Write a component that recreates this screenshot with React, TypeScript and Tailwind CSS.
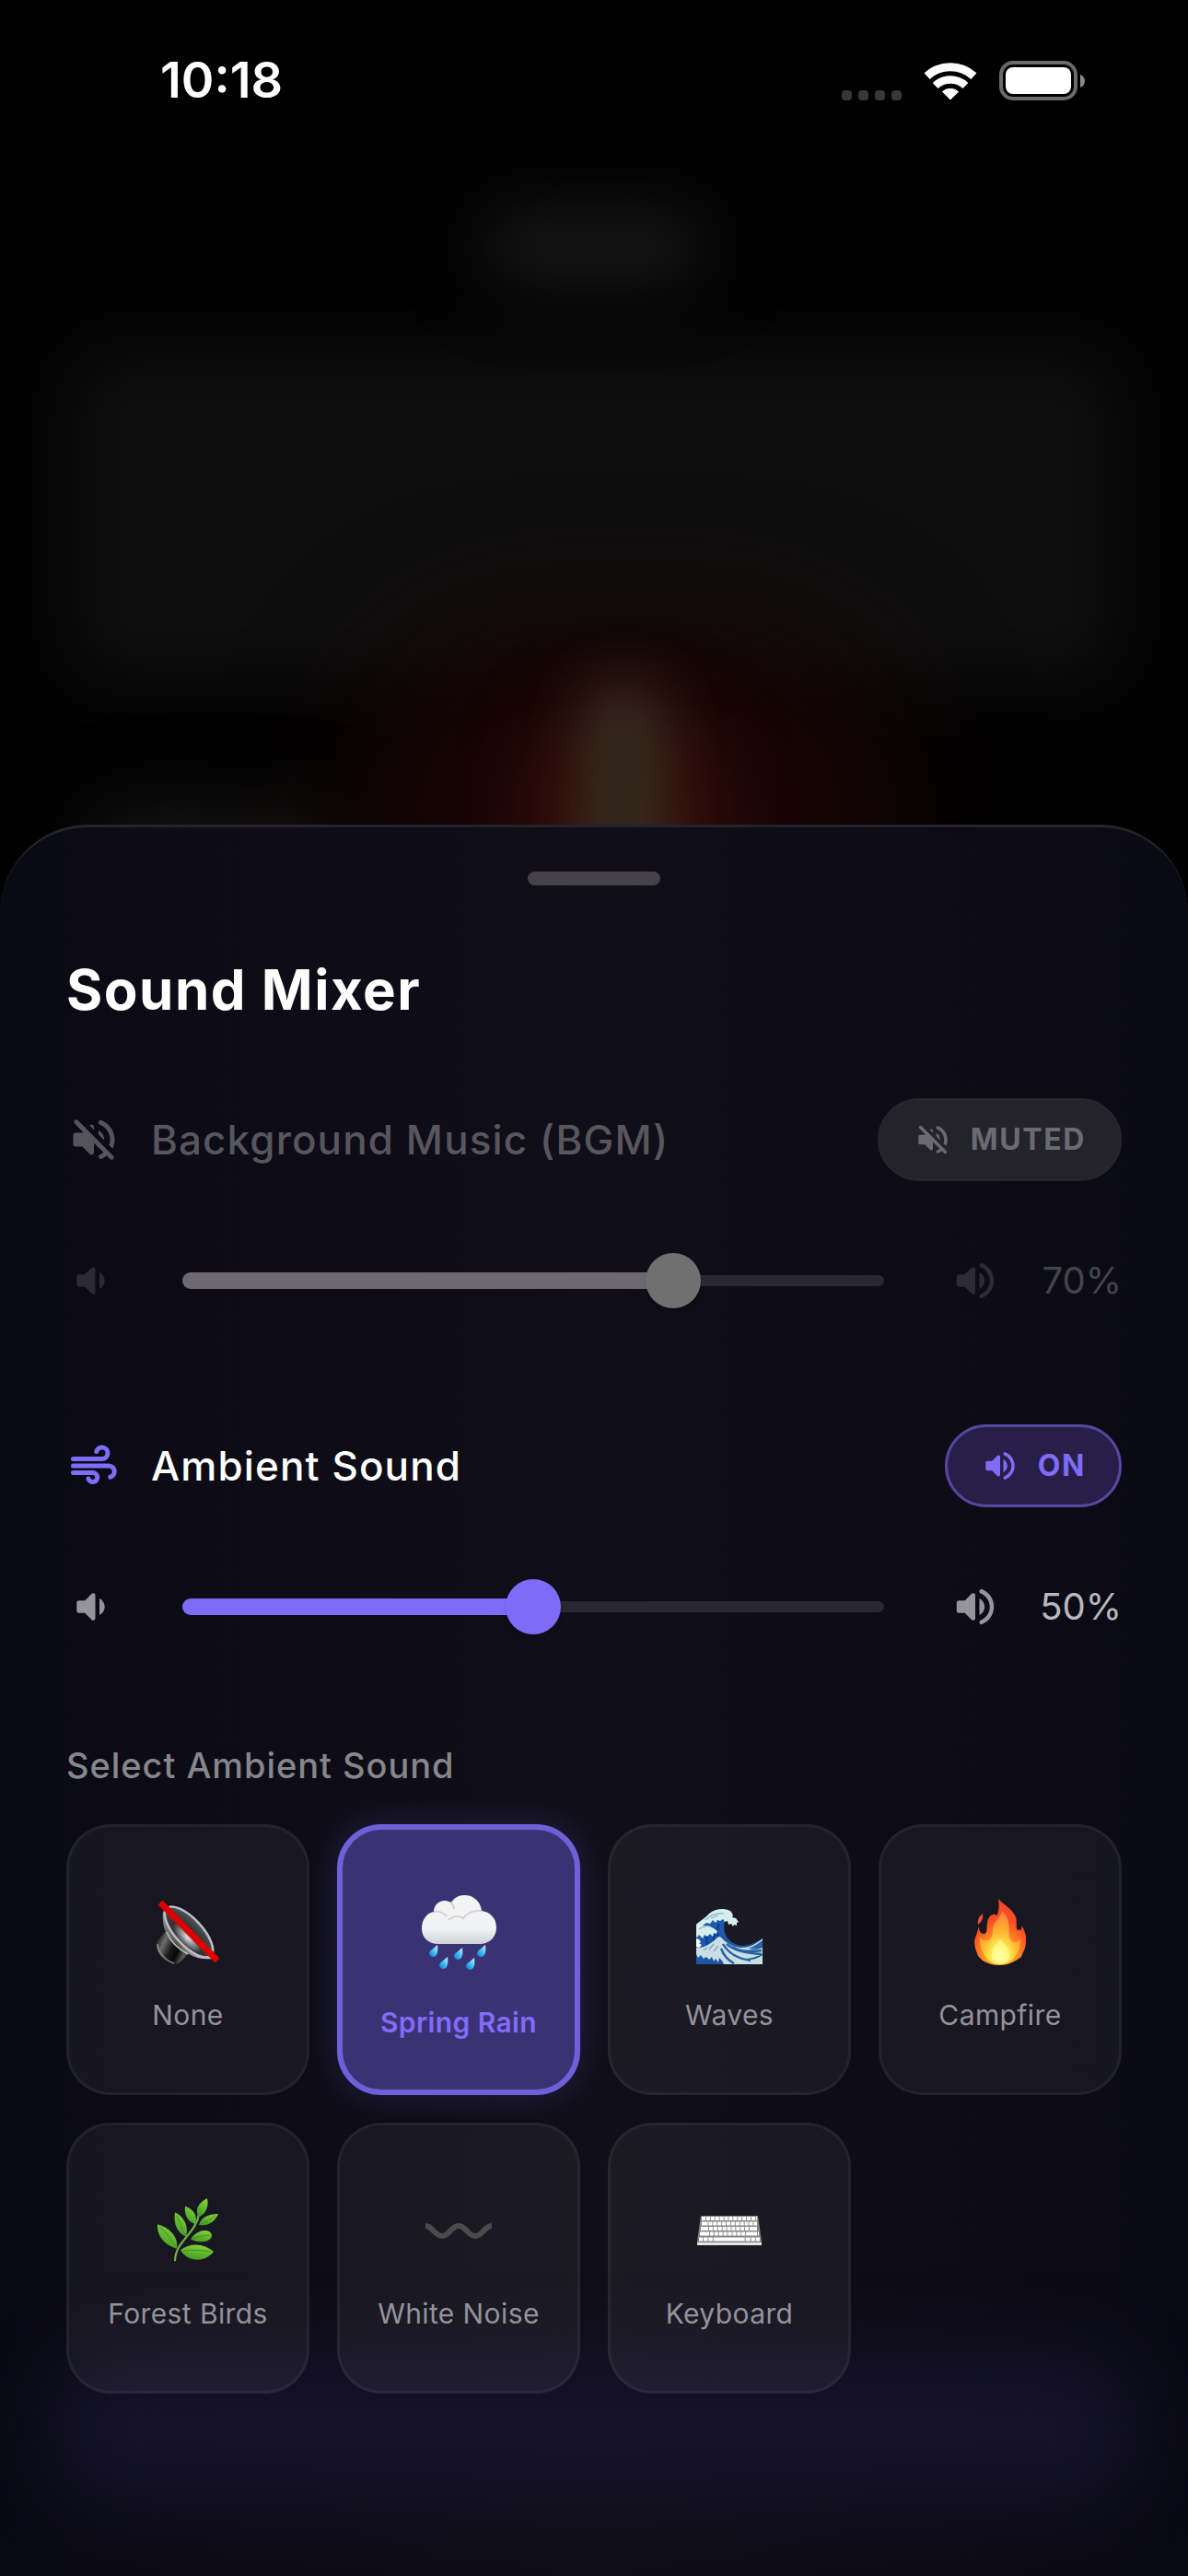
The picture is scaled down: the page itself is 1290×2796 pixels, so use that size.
import { useState } from "react";

type IconProps = { className?: string };

type Sound = {
  id: string;
  label: string;
  icon: () => React.JSX.Element;
};

function VolumeUpIcon({ className }: IconProps) {
  return (
    <svg viewBox="0 0 24 24" fill="currentColor" className={className} aria-hidden="true">
      <path d="M3 10v4c0 .55.45 1 1 1h3l3.29 3.29c.63.63 1.71.18 1.71-.71V6.41c0-.89-1.08-1.34-1.71-.71L7 9H4c-.55 0-1 .45-1 1zm13.5 2c0-1.77-1.02-3.29-2.5-4.03v8.05c1.48-.73 2.5-2.25 2.5-4.02zM14 4.45v.2c0 .38.25.71.6.85C17.18 6.53 19 9.06 19 12s-1.82 5.47-4.4 6.5c-.36.14-.6.47-.6.85v.2c0 .63.63 1.07 1.21.85C18.6 19.11 21 15.84 21 12s-2.4-7.11-5.79-8.4c-.58-.23-1.21.22-1.21.85z" />
    </svg>
  );
}

function VolumeDownIcon({ className }: IconProps) {
  return (
    <svg viewBox="0 0 24 24" fill="currentColor" className={className} aria-hidden="true">
      <path d="M18.5 12c0-1.77-1.02-3.29-2.5-4.03v8.05c1.48-.73 2.5-2.25 2.5-4.02zM5 10v4c0 .55.45 1 1 1h3l3.29 3.29c.63.63 1.71.18 1.71-.71V6.41c0-.89-1.08-1.34-1.71-.71L9 9H6c-.55 0-1 .45-1 1z" />
    </svg>
  );
}

function VolumeOffIcon({ className }: IconProps) {
  return (
    <svg viewBox="0 0 24 24" fill="currentColor" className={className} aria-hidden="true">
      <path d="M3.63 3.63c-.39.39-.39 1.02 0 1.41L7.29 8.7 7 9H4c-.55 0-1 .45-1 1v4c0 .55.45 1 1 1h3l3.29 3.29c.63.63 1.71.18 1.71-.71v-4.17l4.18 4.18c-.49.37-1.02.68-1.6.91-.36.15-.58.53-.58.92 0 .72.73 1.18 1.39.91.8-.33 1.55-.77 2.22-1.31l1.34 1.34c.39.39 1.02.39 1.41 0 .39-.39.39-1.02 0-1.41L5.05 3.63c-.39-.39-1.02-.39-1.42 0zM19 12c0 .82-.15 1.61-.41 2.34l1.53 1.53c.56-1.17.88-2.48.88-3.87 0-3.83-2.4-7.11-5.78-8.4-.59-.23-1.22.23-1.22.86v.19c0 .38.25.71.61.85C17.18 6.54 19 9.06 19 12zm-8.71-6.29l-.17.17L12 7.76V6.41c0-.89-1.08-1.33-1.71-.7zM16.5 12c0-1.77-1.02-3.29-2.5-4.03v1.79l2.48 2.48c.01-.08.02-.16.02-.24z" />
    </svg>
  );
}

function AirIcon({ className }: IconProps) {
  return (
    <svg viewBox="0 0 24 24" fill="none" stroke="currentColor" strokeWidth="2" strokeLinecap="round" className={className} aria-hidden="true">
      <path d="M3 9h12.5a2.5 2.5 0 1 0-2.4-3.2" />
      <path d="M3 12h15.5a2.5 2.5 0 0 1 .6 4.9" />
      <path d="M3 15h8.5a2 2 0 1 1-1.9 2.6" />
    </svg>
  );
}

function MutedSpeakerArt() {
  return (
    <svg viewBox="0 0 70 70" className="size-[70px]" aria-hidden="true">
      <defs>
        <linearGradient id="speakerBase" x1="0" y1="0.3" x2="1" y2="0.8">
          <stop offset="0" stopColor="#1a1a1a" />
          <stop offset="0.2" stopColor="#6d6d6d" />
          <stop offset="0.45" stopColor="#1c1c1c" />
          <stop offset="0.65" stopColor="#050505" />
          <stop offset="0.85" stopColor="#5a5a5a" />
          <stop offset="1" stopColor="#111" />
        </linearGradient>
        <linearGradient id="speakerHorn" x1="0" y1="0" x2="1" y2="1">
          <stop offset="0" stopColor="#8d8d8d" />
          <stop offset="0.5" stopColor="#54534f" />
          <stop offset="1" stopColor="#cfcfd2" />
        </linearGradient>
        <radialGradient id="speakerCone" cx="0.32" cy="0.55" r="0.6">
          <stop offset="0" stopColor="#e4e4e8" />
          <stop offset="0.25" stopColor="#8b8c8f" />
          <stop offset="0.5" stopColor="#303234" />
          <stop offset="1" stopColor="#4a4e50" />
        </radialGradient>
      </defs>
      <path d="M11 34 2 44c-4 6 2 18 11 24 6 3 10 3 14-1l9-8z" fill="url(#speakerBase)" />
      <path d="M2 48c0 8 8 18 18 21" fill="none" stroke="#8f8f8f" strokeWidth="1.5" />
      <path d="M8 12c-1 9 0 17 3 23 4 10 14 20 25 24 9 5 18 6 26 5z" fill="url(#speakerHorn)" />
      <path d="M12 35c4 10 13 19 23 24" fill="none" stroke="#bdbdbd" strokeWidth="1.5" />
      <ellipse cx="36" cy="35" rx="14.5" ry="35" transform="rotate(-43 36 35)" fill="url(#speakerCone)" stroke="#bcbdc6" strokeWidth="2.6" />
      <path d="M5 3 67 66" stroke="#de0000" strokeWidth="7" />
    </svg>
  );
}

function RainCloudArt() {
  return (
    <svg viewBox="0 0 81 81" className="size-[81px]" aria-hidden="true">
      <defs>
        <linearGradient id="cloudFill" x1="0" y1="0" x2="0" y2="1">
          <stop offset="0" stopColor="#f4f4f5" />
          <stop offset="0.7" stopColor="#f1f2f3" />
          <stop offset="1" stopColor="#cfd2d6" />
        </linearGradient>
        <linearGradient id="dropFill" x1="1" y1="0" x2="0.2" y2="1">
          <stop offset="0" stopColor="#d5f6ff" />
          <stop offset="0.5" stopColor="#4cc6f7" />
          <stop offset="1" stopColor="#0c86d6" />
        </linearGradient>
        <path id="drop" d="M9 0c1 7 0 13-5 13-5-1-5-6-1-8z" />
      </defs>
      <path d="M18 53C7 53 0 46 0 36c0-10 6-17 13-18 0-7 5-12 12-12 3 0 5 1 7 2 3-5 8-8 14-8 11 0 18 8 19 17 9 1 16 8 16 18 0 11-8 18-18 18z" fill="url(#cloudFill)" />
      <path d="M13 18c5-1 10 1 14 5M31 8c3 2 4 4 4 7M29 27c5-5 13-5 17-1M45 25c4-6 12-9 20-8" fill="none" stroke="#d0d1d4" strokeWidth="1.8" />
      <g fill="url(#dropFill)">
        <use href="#drop" x="8" y="54" />
        <use href="#drop" x="35" y="57" />
        <use href="#drop" x="60" y="54" />
        <use href="#drop" x="19" y="67" />
        <use href="#drop" x="48" y="68" />
      </g>
    </svg>
  );
}

function WaveArt() {
  return (
    <svg viewBox="0 -10 72 70" className="h-[70px] w-[72px]" aria-hidden="true">
      <defs>
        <linearGradient id="sea" x1="0" y1="0" x2="0.6" y2="1">
          <stop offset="0" stopColor="#1d5cb8" />
          <stop offset="1" stopColor="#1c549c" />
        </linearGradient>
      </defs>
      <path d="M0 60V17C3 13 10 9 17 3c8-4 17-3 21 2l-7 9c-2 8 0 15 5 20 8 7 18 9 36-2v28z" fill="url(#sea)" />
      <path d="M25 16c-3 6-3 11-1 15M13 27c-2 4-2 8-1 11M20 27c-2 4-1 7 0 9" fill="none" stroke="#0d3f92" strokeWidth="2.5" />
      <path d="M0 17C4 13 9 11 14 5c7-5 17-7 24-2l2 4-1 2 4 1 3 4-2 1 0 3-3-1-1 2-2-3-3 1-1-4-3 1-2-3-3 2-3-1-2 3-3-3-3 4-4-1-4 3 6 0 6 3 4 3-1 3-3-1-1 4-3-3-3 3-3-2-2 4-4-4-2 3-3-3z" fill="#d6efee" />
      <path d="M10 12c5-5 12-8 20-7M3 22c4-3 8-4 12-3M16 10l8-3" fill="none" stroke="#86b4c6" strokeWidth="1.2" />
      <path d="M0 32l3 1 2 3-2 1 3 2-3 3-3-1z" fill="#fff" />
      <path d="M0 42c8 1 16-4 24-12 3 0 4 2 6 4 7 6 14 8 20 8 8 0 15-4 22-10v5c-4 5-10 7-17 7 6 1 11 0 17-2v7c-7 3-14 5-20 5 6 2 13 1 20-4v10H30l-2-4-3-3-1 5-3-4-2 3-2-5-3 3-3-3-3 2-3-4-3 3-2-4z" fill="#c9dfe4" />
      <path d="M33 38c8 7 20 10 38 11M29 38c6 10 16 16 30 18M39 41c8 5 20 6 32 4M27 43c3 8 8 13 14 16" fill="none" stroke="#2561a4" strokeWidth="2.4" />
      <path d="M56 43c6-2 11-5 16-9v8z" fill="#2863a8" />
      <path d="M8 45l4-3M14 44l5-6M19 46l5-6" fill="none" stroke="#7ba5c4" strokeWidth="1.2" />
    </svg>
  );
}

function FireArt() {
  return (
    <svg viewBox="0 0 56 72" className="h-[72px] w-14" aria-hidden="true">
      <defs>
        <radialGradient id="flameOuter" cx="0.5" cy="0.9" r="0.9">
          <stop offset="0" stopColor="#ffc02a" />
          <stop offset="0.4" stopColor="#ff8a24" />
          <stop offset="0.65" stopColor="#fb4e22" />
          <stop offset="1" stopColor="#f5452a" />
        </radialGradient>
        <radialGradient id="flameInner" cx="0.5" cy="0.85" r="0.8">
          <stop offset="0" stopColor="#fffcc8" />
          <stop offset="0.25" stopColor="#ffef5a" />
          <stop offset="0.55" stopColor="#ffb72f" />
          <stop offset="1" stopColor="#ff8140" />
        </radialGradient>
      </defs>
      <path d="M26 0c5 6 16 11 19 20 2 6-1 14 3 14 3 0 4-2 3-5 4 5 6 12 5 18 0 5-2 9-4 13l-1 3-6 4c-5 3-11 5-18 5s-13-2-18-5l-5-5-1-3c-3-7-4-14-1-19 1-4 2-7 3-10 0 5 2 8 5 8 5 0 3-7 4-12 1-6 4-9 7-9 2 0 3 0 3 2 3-6 3-12 2-19z" fill="url(#flameOuter)" />
      <path d="M9 16c1 5-1 9-5 12-1-5 1-9 5-12z" fill="#ec4b33" />
      <path d="M30 13c-1 9-10 10-10 22 0 7-3 11-8 10-3 0-5-2-6-4-1 13 6 30 21 30 16 0 23-14 23-27-4 5-11 4-12-3-1-9 2-18-8-28z" fill="url(#flameInner)" />
      <path d="M28 44c-6 6-10 12-9 19 2 9 17 9 19 0 1-7-4-13-10-19z" fill="#ffff9a" opacity="0.6" />
    </svg>
  );
}

function HerbArt() {
  return (
    <svg viewBox="0 0 66 82" preserveAspectRatio="none" className="h-[70px] w-[66px]" aria-hidden="true">
      <defs>
        <linearGradient id="leaf" x1="0.7" y1="0" x2="0.3" y2="1">
          <stop offset="0" stopColor="#86d23a" />
          <stop offset="1" stopColor="#3f9a25" />
        </linearGradient>
      </defs>
      <path d="M19 80c0-25 23-35 26-60" fill="none" stroke="#74b53c" strokeWidth="2.2" />
      <g fill="url(#leaf)">
        <path d="M54 0c2 10-1 19-9 24-5-9-1-18 9-24z" />
        <path d="M30 10c9 4 14 12 11 23-9-4-12-12-11-23z" />
        <path d="M66 20c-4 10-11 16-21 14 2-9 10-14 21-14z" />
        <path d="M19 18c10 6 15 17 12 31-10-5-14-17-12-31z" />
        <path d="M36 52c6-12 21-15 23-5 0 9-13 11-23 5z" />
        <path d="M0 33c14 4 23 17 21 31C8 60-1 48 0 33z" />
        <path d="M25 66c11-11 27-8 36 2-9 13-27 15-36-2z" />
      </g>
      <path d="M2 36c8 8 14 17 18 27M27 67c11-2 22-1 31 1M21 22c3 9 6 17 9 25M38 51c6-2 12-4 19-4M47 33c6-3 11-7 16-11" fill="none" stroke="#3c8f22" strokeWidth="1" />
    </svg>
  );
}

function WavyDashArt() {
  return (
    <svg viewBox="0 0 72 18" className="h-[18px] w-[72px]" aria-hidden="true">
      <path d="M0 4c8 0 10 11 18 11S28 4 36 4s10 11 18 11S64 4 72 4" fill="none" stroke="#4b4b4b" strokeWidth="6" />
    </svg>
  );
}

function KeyboardArt() {
  return (
    <svg viewBox="0 0 70 32" className="h-8 w-[70px]" aria-hidden="true">
      <path d="M4 0h62l4 28v4H0v-4z" fill="#868786" />
      <path d="M0 29h70v3H0z" fill="#e6e7e3" />
      <g stroke="#fff" strokeWidth="4" fill="none">
        <path d="M5 3H65" strokeDasharray="4 0.9" />
        <path d="M5 8.5H65" strokeDasharray="6.5 0.9 4 0.9 4 0.9 4 0.9 4 0.9 4 0.9 4 0.9 4 0.9 4 0.9 4 0.9 4 0.9" />
        <path d="M4 14H66" strokeDasharray="8 0.9 4 0.9 4 0.9 4 0.9 4 0.9 4 0.9 4 0.9 4 0.9 4 0.9 4 0.9 8 1" />
        <path d="M3 19.5H67" strokeDasharray="10 0.9 4 0.9 4 0.9 4 0.9 4 0.9 4 0.9 4 0.9 4 0.9 4 0.9 12 1" />
        <path d="M2 25.5H68" strokeDasharray="4 0.9 4.5 0.9 4.5 0.9 34 1 5 1 4 1 5 1" />
      </g>
    </svg>
  );
}

const SOUNDS: Sound[] = [
  { id: "none", label: "None", icon: MutedSpeakerArt },
  { id: "rain", label: "Spring Rain", icon: RainCloudArt },
  { id: "waves", label: "Waves", icon: WaveArt },
  { id: "campfire", label: "Campfire", icon: FireArt },
  { id: "forest", label: "Forest Birds", icon: HerbArt },
  { id: "noise", label: "White Noise", icon: WavyDashArt },
  { id: "keyboard", label: "Keyboard", icon: KeyboardArt },
];

function StatusBar() {
  return (
    <header className="flex h-[174px] items-center justify-between pr-[112px] pl-[174px] text-white">
      <time className="text-[54px] leading-none font-semibold">10:18</time>
      <div className="flex items-center gap-6">
        <div className="mt-8 flex gap-[7px]">
          <span className="h-[11px] w-[11px] rounded bg-[#373737]" />
          <span className="h-[11px] w-[11px] rounded bg-[#373737]" />
          <span className="h-[11px] w-[11px] rounded bg-[#373737]" />
          <span className="h-[11px] w-[11px] rounded bg-[#373737]" />
        </div>
        <svg viewBox="0 0 58 43" className="h-[43px] w-[58px]" aria-hidden="true">
          <g fill="none" stroke="#fff" strokeWidth="9">
            <path d="M3.6 16.6A37.5 37.5 0 0 1 54.4 16.6" />
            <path d="M12.6 27A24 24 0 0 1 45.4 27" strokeWidth="8.5" />
          </g>
          <path d="M29 42 20.4 33.6A13 13 0 0 1 37.6 33.6z" fill="#fff" stroke="#fff" strokeWidth="1" strokeLinejoin="round" />
        </svg>
        <svg viewBox="0 0 93 43" className="h-[43px] w-[93px]" aria-hidden="true">
          <rect x="2" y="2" width="81" height="39" rx="13" fill="none" stroke="#6a6a6a" strokeWidth="4" />
          <rect x="7" y="7" width="71" height="29" rx="8" fill="#fff" />
          <path d="M88 15c3 1 5 4 5 7s-2 6-5 7z" fill="#8a8a8a" />
        </svg>
      </div>
    </header>
  );
}

// Dimmed, blurred remains of the timer screen that sits under the sheet
function Backdrop() {
  return (
    <div className="absolute inset-0 overflow-hidden" aria-hidden="true">
      <div className="absolute inset-x-[5%] top-[370px] h-[380px] rounded-[60px] bg-[#0e0e0e] blur-[40px]" />
      <div className="absolute top-[220px] left-[40%] h-24 w-[20%] rounded-full bg-[#151515] blur-[36px]" />
      <div className="absolute top-[860px] left-[6%] h-40 w-[24%] rounded-full bg-[#121010] blur-[36px]" />
      <div className="absolute top-[680px] left-[30%] h-[400px] w-[46%] rounded-full bg-[#190505] blur-[72px]" />
      <div className="absolute top-[760px] left-[45%] h-[320px] w-[15%] rounded-full bg-[#380f0a] blur-[40px]" />
      <div className="absolute top-[740px] left-[49%] h-[320px] w-[7%] rounded-full bg-[#33291e] blur-[28px]" />
    </div>
  );
}

type ChannelProps = {
  name: string;
  muted: boolean;
  volume: number;
  onToggle: () => void;
  onVolume: (value: number) => void;
  ambient?: boolean;
};

function Channel({ name, muted, volume, onToggle, onVolume, ambient = false }: ChannelProps) {
  const sliderId = ambient ? "ambient-volume" : "bgm-volume";

  return (
    <section className="flex flex-col">
      <div className="flex h-[90px] items-center">
        {muted ? (
          <VolumeOffIcon className="h-15 w-15 text-[#55545b]" />
        ) : (
          <AirIcon className="h-15 w-15 text-[#816cf8]" />
        )}
        <label
          htmlFor={sliderId}
          className={`ml-8 flex-1 text-[44px] leading-none font-medium tracking-wide ${muted ? "text-[#57565c]" : "text-white"}`}
        >
          {name}
        </label>
        <button
          type="button"
          onClick={onToggle}
          aria-pressed={!muted}
          className={`flex h-[90px] items-center gap-5 rounded-full border-3 px-9 text-[32px] leading-none font-bold tracking-wider ${
            muted ? "border-[#26252c] bg-[#24232b] text-[#6b6a70]" : "border-[#54479f] bg-[#271f48] text-[#816cf8]"
          }`}
        >
          {muted ? <VolumeOffIcon className="h-[42px] w-[42px]" /> : <VolumeUpIcon className="h-[42px] w-[42px]" />}
          {muted ? "MUTED" : "ON"}
        </button>
      </div>

      <div className="mt-9 flex h-[144px] items-center">
        <VolumeDownIcon className={`h-[54px] w-[54px] ${muted ? "text-[#2b2a33]" : "text-[#96959b]"}`} />
        <div className="relative mx-[72px] flex h-15 flex-1 items-center">
          <div className="absolute inset-x-0 h-3 rounded-full bg-[#29272f]" />
          <div
            className={`absolute left-0 h-[18px] rounded-full ${muted ? "bg-[#6c6a70]" : "bg-[#7f6bf5]"}`}
            style={{ width: `${volume}%` }}
          />
          <input
            id={sliderId}
            type="range"
            min={0}
            max={100}
            value={volume}
            onChange={(e) => onVolume(Number(e.target.value))}
            className={`absolute -inset-x-[30px] h-15 appearance-none bg-transparent [&::-webkit-slider-thumb]:h-15 [&::-webkit-slider-thumb]:w-15 [&::-webkit-slider-thumb]:appearance-none [&::-webkit-slider-thumb]:rounded-full [&::-webkit-slider-thumb]:shadow-md ${
              muted ? "[&::-webkit-slider-thumb]:bg-[#707070]" : "[&::-webkit-slider-thumb]:bg-[#7f6bf8]"
            }`}
          />
        </div>
        <VolumeUpIcon className={`h-[54px] w-[54px] ${muted ? "text-[#2d2c34]" : "text-[#96959b]"}`} />
        <output
          htmlFor={sliderId}
          className={`w-[132px] text-right text-[40px] leading-none ${muted ? "text-[#45444b]" : "text-[#b9b8bd]"}`}
        >
          {volume}%
        </output>
      </div>
    </section>
  );
}

export default function App() {
  const [bgmMuted, setBgmMuted] = useState(true);
  const [bgmVolume, setBgmVolume] = useState(70);
  const [ambientMuted, setAmbientMuted] = useState(false);
  const [ambientVolume, setAmbientVolume] = useState(50);
  const [selected, setSelected] = useState("rain");

  return (
    <div className="relative flex min-h-screen flex-col bg-black font-['Inter',sans-serif]">
      <Backdrop />
      <div className="relative">
        <StatusBar />
      </div>

      <main className="relative mt-[721px] flex-1 overflow-hidden rounded-t-[96px] border-t-3 border-[#25242c] bg-linear-to-r from-[#0a0a15] via-[#100e18] to-[#0a0a15] px-[72px] pt-12">
        {/* glow of the button bar behind the sheet */}
        <div className="absolute inset-x-[5%] bottom-[86px] h-[150px] rounded-[60px] bg-[#15122a] blur-[40px]" aria-hidden="true" />

        <div className="relative flex flex-col">
          <div className="mx-auto h-[15px] w-36 rounded-full bg-[#454249]" />
          <h1 className="mt-[77px] text-[60px] leading-[72px] font-bold tracking-wide text-white">Sound Mixer</h1>

          <div className="mt-[82px] flex flex-col gap-[84px]">
            <Channel
              name="Background Music (BGM)"
              muted={bgmMuted}
              volume={bgmVolume}
              onToggle={() => setBgmMuted(!bgmMuted)}
              onVolume={setBgmVolume}
            />
            <Channel
              ambient
              name="Ambient Sound"
              muted={ambientMuted}
              volume={ambientVolume}
              onToggle={() => setAmbientMuted(!ambientMuted)}
              onVolume={setAmbientVolume}
            />
          </div>

          <h2 className="mt-[76px] text-[38px] leading-12 font-medium tracking-wide text-[#87868b]">
            Select Ambient Sound
          </h2>

          <div className="mt-10 mb-[190px] grid grid-cols-4 gap-[30px]">
            {SOUNDS.map(({ id, label, icon: Art }) => {
              const active = id === selected;
              return (
                <button
                  key={id}
                  type="button"
                  aria-pressed={active}
                  onClick={() => setSelected(id)}
                  className={`flex h-[294px] flex-col items-center justify-center rounded-[48px] tracking-wide ${
                    active
                      ? "border-6 border-[#705fd9] bg-[#3b3274] font-semibold text-[#816cf8] shadow-[0_0_36px_#7c6cf838]"
                      : "border-3 border-white/5 bg-white/5 text-[#94939b]"
                  }`}
                >
                  <span className={`flex items-center ${active ? "h-28" : "h-24"}`}>
                    <Art />
                  </span>
                  <span className="mt-6 text-[30px] leading-9">{label}</span>
                </button>
              );
            })}
          </div>
        </div>
      </main>
    </div>
  );
}
